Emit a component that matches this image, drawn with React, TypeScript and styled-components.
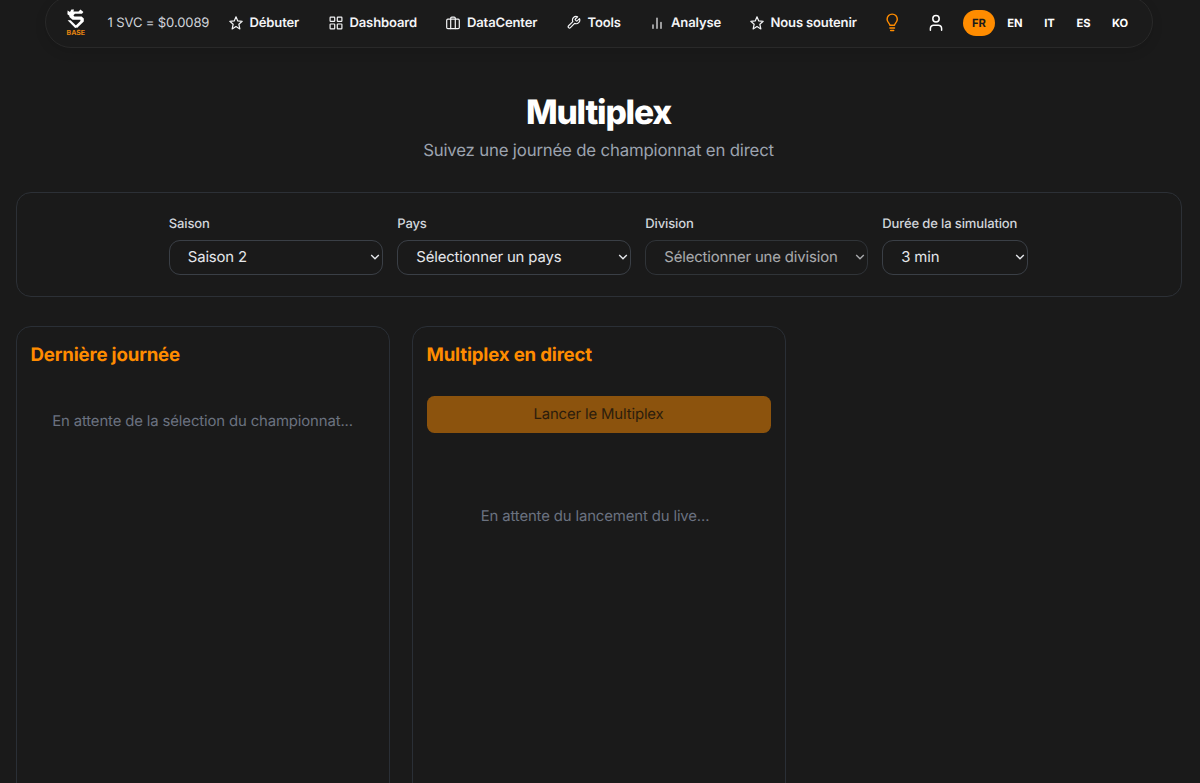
import React from "react";
import styled, { createGlobalStyle } from "styled-components";

const GlobalStyle = createGlobalStyle`
  * { box-sizing: border-box; }
  html, body { margin: 0; background: #1a1a1a; }
  body {
    height: 783px;
    overflow: hidden;
    font-family: Inter, "Liberation Sans", sans-serif;
    text-rendering: geometricPrecision;
    color: #e5e7eb;
  }
  h1, h2, p { margin: 0; }
`;

const Page = styled.div`
  width: 1197px;
  height: 783px;
  overflow: hidden;
  display: flex;
  flex-direction: column;
`;

const NavBar = styled.nav`
  flex: none;
  height: 52px;
  width: 1108px;
  margin: -4px 0 0 45px;
  padding: 1px 0 0 19px;
  display: flex;
  align-items: center;
  border: 1px solid #292929;
  border-radius: 26px;
  background: #1b1b1b;
  box-shadow: 0 4px 12px rgba(0, 0, 0, 0.1);
`;

const Brand = styled.div`
  width: 42.5px;
  padding-left: 1.5px;
  height: 28px;
  svg { display: block; }
`;

const BrandName = styled.div`
  margin-top: 1px;
  font-size: 7px;
  line-height: 8px;
  font-weight: 700;
  color: #e48410;
`;

const Rate = styled.div`
  width: 121px;
  padding-top: 1px;
  font-size: 13.05px;
  line-height: 18px;
  font-weight: 400;
  letter-spacing: -0.13px;
  white-space: nowrap;
  color: #d1d5db;
`;

const NavItem = styled.a<{ $width: number }>`
  width: ${(p) => p.$width}px;
  display: flex;
  align-items: center;
  gap: 7px;
  font-size: 13.05px;
  line-height: 18px;
  font-weight: 600;
  letter-spacing: -0.15px;
  white-space: nowrap;
  color: #f3f4f6;
  svg { flex: none; }
`;

const NavLabel = styled.span`
  padding-top: 1px;
`;

const IconLink = styled.a<{ $width: number; $color: string }>`
  width: ${(p) => p.$width}px;
  display: flex;
  color: ${(p) => p.$color};
`;

const Lang = styled.a<{ $width: number; $active?: boolean }>`
  width: ${(p) => p.$width}px;
  height: 26px;
  display: flex;
  align-items: center;
  justify-content: center;
  border-radius: 13px;
  font-size: 11.2px;
  font-weight: 700;
  background: ${(p) => (p.$active ? "#ff8c00" : "transparent")};
  color: ${(p) => (p.$active ? "#1a1a1a" : "#fff")};
`;

const Header = styled.header`
  margin-top: 46px;
  display: flex;
  flex-direction: column;
  align-items: center;
`;

const Title = styled.h1`
  font-size: 33.6px;
  line-height: 37px;
  font-weight: 800;
  letter-spacing: -1.17px;
  color: #fff;
`;

const Subtitle = styled.p`
  margin-top: 7px;
  font-size: 16.8px;
  line-height: 26px;
  letter-spacing: -0.18px;
  color: #9ca3af;
`;

const Filters = styled.section`
  flex: none;
  height: 105px;
  margin: 28px 15.5px 0 15.5px;
  padding-top: 22px;
  display: flex;
  justify-content: center;
  gap: 14.5px;
  border: 1px solid #2c3036;
  border-radius: 15px;
`;

const Field = styled.label<{ $width: number }>`
  width: ${(p) => p.$width}px;
  display: flex;
  flex-direction: column;
  gap: 6px;
`;

const FieldLabel = styled.span`
  font-size: 13.05px;
  line-height: 19px;
  font-weight: 500;
  letter-spacing: -0.14px;
  white-space: nowrap;
  color: #d1d5db;
`;

const SelectBox = styled.span<{ $disabled?: boolean }>`
  height: 35px;
  padding: 0 2px 1px 18px;
  display: flex;
  align-items: center;
  justify-content: space-between;
  border: 1px solid #3a3f46;
  border-radius: 11px;
  font-size: 14.9px;
  line-height: 22px;
  letter-spacing: -0.14px;
  white-space: nowrap;
  color: #e5e7eb;
  opacity: ${(p) => (p.$disabled ? 0.7 : 1)};
`;

const Columns = styled.main`
  flex: 1;
  margin: 29px 15.5px 0 15.5px;
  display: grid;
  grid-template-columns: repeat(3, 1fr);
  gap: 22px;
`;

const Panel = styled.section`
  height: 520px;
  padding: 15px 14px 14px;
  display: flex;
  flex-direction: column;
  border: 1px solid #2a2f36;
  border-radius: 15px;
`;

const PanelTitle = styled.h2`
  font-size: 18.65px;
  line-height: 26px;
  font-weight: 700;
  letter-spacing: -0.18px;
  color: #ff8c00;
`;

const Launch = styled.button`
  margin-top: 28px;
  height: 37px;
  padding: 0 0 2px;
  border: 0;
  border-radius: 7.5px;
  background: #8c530d;
  color: #2c1d0c;
  font: 400 14.9px/22px Inter, "Liberation Sans", sans-serif;
  letter-spacing: -0.14px;
  text-rendering: inherit;
`;

const Empty = styled.p<{ $top: number; $shift?: number }>`
  margin-top: ${(p) => p.$top}px;
  padding-right: ${(p) => p.$shift ?? 0}px;
  text-align: center;
  font-size: 14.9px;
  line-height: 22px;
  letter-spacing: -0.135px;
  color: #6b7280;
`;

const stroke = {
  fill: "none",
  stroke: "currentColor",
  strokeLinecap: "round" as const,
  strokeLinejoin: "round" as const,
};

const Logo = () => (
  <svg width="18" height="19" viewBox="0 0 18 19" fill="#fff">
    <path d="M.6 1.4L3 3L4.4 .6H7L6.4 2.4H11.6L13.4 .6L16.4 3L15 4.8H8L6.4 6.2L7.4 7.4H14.6L16.8 9.6V12.4L10 19L8 17.2L13.4 12V10.8H5.6L2.4 8V6.8L.4 5.2Z" />
    <path d="M.6 11.2H3.6L10 17.4L8.4 19.2Z" />
  </svg>
);

const Star = () => (
  <svg width="14" height="14" viewBox="0 0 14 14" {...stroke} strokeWidth="1.2">
    <path d="M7 .8L8.75 4.9L13.2 5.3L9.85 8.25L10.85 12.9L7 10.5L3.15 12.9L4.15 8.25L.8 5.3L5.25 4.9Z" />
  </svg>
);

const Grid = () => (
  <svg width="14" height="14" viewBox="0 0 14 14" {...stroke} strokeWidth="1.2">
    <rect x="1.1" y="1.1" width="4.6" height="4.2" rx=".6" />
    <rect x="8.3" y="1.1" width="4.6" height="4.2" rx=".6" />
    <rect x="1.1" y="8" width="4.6" height="4.8" rx=".6" />
    <rect x="8.3" y="8" width="4.6" height="4.8" rx=".6" />
  </svg>
);

const Case = () => (
  <svg width="14" height="14" viewBox="0 0 14 14" {...stroke} strokeWidth="1.2">
    <rect x=".7" y="3.2" width="12.6" height="9.4" rx="1.2" />
    <path d="M4.7 12.6V2.2a1.1 1.1 0 0 1 1.1-1.1h2.4a1.1 1.1 0 0 1 1.1 1.1v10.4" />
  </svg>
);

const Wrench = () => (
  <svg width="14" height="15" viewBox="1 0 23 24" {...stroke} strokeWidth="1.9">
    <path d="M14.7 6.3a1 1 0 0 0 0 1.4l1.6 1.6a1 1 0 0 0 1.4 0l3.77-3.77a6 6 0 0 1-7.94 7.94l-6.91 6.91a2.12 2.12 0 0 1-3-3l6.91-6.91a6 6 0 0 1 7.94-7.94l-3.76 3.76z" />
  </svg>
);

const Bars = () => (
  <svg width="14" height="14" viewBox="0 0 14 14" {...stroke} strokeWidth="1.2">
    <path d="M3 8.8V12.3M7 2V12.3M11 6.4V12.3" />
  </svg>
);

const Bulb = () => (
  <svg width="15" height="19" viewBox="0 0 15 19" {...stroke} strokeWidth="1.45">
    <path d="M4.9 12.2C4.9 10.4 2.1 9.4 2.1 6.2a5.1 5.1 0 0 1 10.2 0c0 3.2-2.8 4.2-2.8 6ZM4.9 14.9h4.6M5.7 17.4h3" />
  </svg>
);

const User = () => (
  <svg width="14" height="18" viewBox="0 0 14 18" {...stroke} strokeWidth="1.5">
    <circle cx="7" cy="4.7" r="3.2" />
    <path d="M1.4 16.2V14.4a3.2 3.2 0 0 1 3.2-3.2h4.8a3.2 3.2 0 0 1 3.2 3.2v1.8" />
  </svg>
);

const Chevron = () => (
  <svg width="10" height="10" viewBox="0 0 10 10" fill="none" stroke="currentColor" strokeWidth="1.4">
    <path d="M1.2 3L5 6.8L8.8 3" />
  </svg>
);

const navItems = [
  { label: "Débuter", icon: <Star />, width: 100 },
  { label: "Dashboard", icon: <Grid />, width: 117.5 },
  { label: "DataCenter", icon: <Case />, width: 120.5 },
  { label: "Tools", icon: <Wrench />, width: 83.5 },
  { label: "Analyse", icon: <Bars />, width: 99.5 },
  { label: "Nous soutenir", icon: <Star />, width: 135 },
];

const languages = [
  { code: "FR", width: 32, active: true },
  { code: "EN", width: 40 },
  { code: "IT", width: 29 },
  { code: "ES", width: 39 },
  { code: "KO", width: 34 },
];

const fields = [
  { label: "Saison", value: "Saison 2", width: 214 },
  { label: "Pays", value: "Sélectionner un pays", width: 233.5 },
  { label: "Division", value: "Sélectionner une division", width: 222.5, disabled: true },
  { label: "Durée de la simulation", value: "3 min", width: 146 },
];

export default function App() {
  return (
    <>
      <GlobalStyle />
      <Page>
        <NavBar>
          <Brand>
            <Logo />
            <BrandName>BASE</BrandName>
          </Brand>
          <Rate>1 SVC = $0.0089</Rate>
          {navItems.map((item) => (
            <NavItem key={item.label} $width={item.width}>
              {item.icon}
              <NavLabel>{item.label}</NavLabel>
            </NavItem>
          ))}
          <IconLink $width={44} $color="#ff8c00"><Bulb /></IconLink>
          <IconLink $width={34.5} $color="#fff"><User /></IconLink>
          {languages.map((lang) => (
            <Lang key={lang.code} $width={lang.width} $active={lang.active}>
              {lang.code}
            </Lang>
          ))}
        </NavBar>
        <Header>
          <Title>Multiplex</Title>
          <Subtitle>Suivez une journée de championnat en direct</Subtitle>
        </Header>
        <Filters>
          {fields.map((field) => (
            <Field key={field.label} $width={field.width}>
              <FieldLabel>{field.label}</FieldLabel>
              <SelectBox $disabled={field.disabled}>
                {field.value}
                <Chevron />
              </SelectBox>
            </Field>
          ))}
        </Filters>
        <Columns>
          <Panel>
            <PanelTitle>Dernière journée</PanelTitle>
            <Empty $top={42}>En attente de la sélection du championnat...</Empty>
          </Panel>
          <Panel>
            <PanelTitle>Multiplex en direct</PanelTitle>
            <Launch disabled>Lancer le Multiplex</Launch>
            <Empty $top={72} $shift={7}>En attente du lancement du live...</Empty>
          </Panel>
        </Columns>
      </Page>
    </>
  );
}
